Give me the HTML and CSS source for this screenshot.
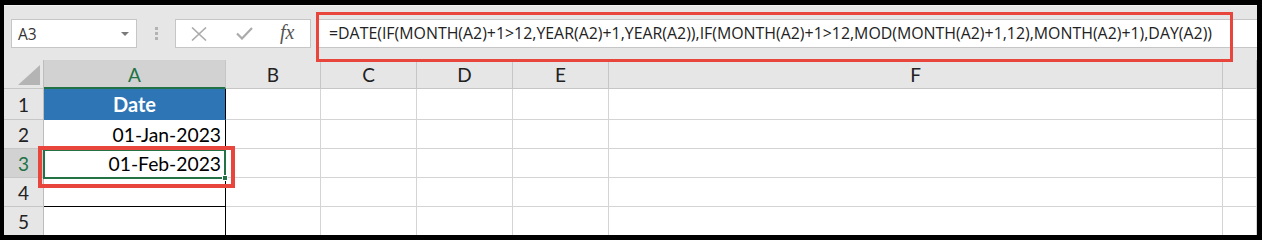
FILE: index.html
```html
<!DOCTYPE html>
<html>
<head>
<meta charset="utf-8">
<link rel="stylesheet" href="styles.css">
</head>
<body>
<div class="page">
  <div class="frame">
    <div class="toolbar">
      <div class="namebox">
        <span class="name">A3</span>
        <svg class="arrow" width="8" height="4" viewBox="0 0 8 4"><path d="M0 0 L8 0 L4 4 Z" fill="#7a7a7a"/></svg>
      </div>
      <div class="dots"><i></i><i></i><i></i></div>
      <div class="buttons">
        <svg class="btn" width="16" height="14" viewBox="0 0 16 14"><path d="M1 0.5 L15 13.5 M15 0.5 L1 13.5" stroke="#ababab" stroke-width="1.6" fill="none"/></svg>
        <svg class="btn" width="17" height="13" viewBox="0 0 17 13"><path d="M1 6.5 L6 11.5 L16 1" stroke="#ababab" stroke-width="2.2" fill="none"/></svg>
        <span class="fx">fx</span>
      </div>
      <div class="formula">=DATE(IF(MONTH(A2)+1&gt;12,YEAR(A2)+1,YEAR(A2)),IF(MONTH(A2)+1&gt;12,MOD(MONTH(A2)+1,12),MONTH(A2)+1),DAY(A2))</div>
    </div>
    <div class="sheet">
      <div class="corner"><svg width="22" height="20" viewBox="0 0 22 20"><path d="M22 0 L22 20 L0 20 Z" fill="#b4b4b4"/></svg></div>
      <div class="ch sel">A</div>
      <div class="ch">B</div>
      <div class="ch">C</div>
      <div class="ch">D</div>
      <div class="ch">E</div>
      <div class="ch">F</div>
      <div class="ch"></div>

      <div class="rh r1">1</div>
      <div class="cell a head">Date</div>
      <div class="cell r1c"></div><div class="cell r1c"></div><div class="cell r1c"></div><div class="cell r1c"></div><div class="cell r1c"></div><div class="cell r1c"></div>

      <div class="rh">2</div>
      <div class="cell a val">01-Jan-2023</div>
      <div class="cell"></div><div class="cell"></div><div class="cell"></div><div class="cell"></div><div class="cell"></div><div class="cell"></div>

      <div class="rh sel">3</div>
      <div class="cell a val">01-Feb-2023</div>
      <div class="cell"></div><div class="cell"></div><div class="cell"></div><div class="cell"></div><div class="cell"></div><div class="cell"></div>

      <div class="rh">4</div>
      <div class="cell a last"></div>
      <div class="cell"></div><div class="cell"></div><div class="cell"></div><div class="cell"></div><div class="cell"></div><div class="cell"></div>

      <div class="rh">5</div>
      <div class="cell a"></div>
      <div class="cell"></div><div class="cell"></div><div class="cell"></div><div class="cell"></div><div class="cell"></div><div class="cell"></div>
    </div>
  </div>
  <div class="selection"><span class="handle"></span></div>
  <div class="mark mark-formula"></div>
  <div class="mark mark-cell"></div>
</div>
</body>
</html>
```

FILE: styles.css
```css
* { box-sizing: border-box; }
html, body { margin: 0; padding: 0; }
body { background: #000; width: 1262px; height: 240px; overflow: hidden; }
.page { position: relative; width: 1262px; height: 240px; padding: 5px 5px 5px 4px; }
.frame { background: #e6e6e6; height: 230px; overflow: hidden; }

.toolbar {
  height: 55px;
  display: flex;
  align-items: flex-start;
  border-top: 1px solid #f2f2f2;
  padding-top: 13px;
}
.namebox {
  margin-left: 7px;
  width: 126px;
  height: 29px;
  background: #fff;
  border: 1px solid #c6c6c6;
  display: flex;
  align-items: center;
  justify-content: space-between;
  padding: 0 7px 0 6px;
}
.name { font-family: "Open Sans", "Noto Sans", sans-serif; font-size: 15.5px; color: #333; }
.arrow { display: block; }
.dots {
  margin-left: 18px;
  width: 3px;
  height: 29px;
  display: flex;
  flex-direction: column;
  justify-content: center;
  gap: 2px;
}
.dots i { display: block; width: 3px; height: 3px; background: #b3b3b3; }
.buttons {
  margin-left: 17px;
  width: 136px;
  height: 29px;
  background: #fff;
  border: 1px solid #c6c6c6;
  display: flex;
  align-items: center;
  padding-left: 15px;
}
.btn { display: block; }
.buttons .btn:nth-child(2) { margin-left: 29px; }
.fx {
  margin-left: 27px;
  font-family: "Liberation Serif", serif;
  font-style: italic;
  font-size: 20px;
  color: #555;
  line-height: 1;
  margin-top: -3px;
}
.formula {
  margin-left: 7px;
  flex: 1;
  height: 29px;
  background: #fff;
  border: 1px solid #c6c6c6;
  border-right: none;
  padding-left: 10px;
  font-family: "Open Sans", "Noto Sans", sans-serif;
  font-size: 15.9px;
  line-height: 27px;
  color: #222;
  white-space: nowrap;
  overflow: hidden;
}

.sheet {
  display: grid;
  grid-template-columns: 40px 182px 95px 96px 96px 96px 614px 34px;
  grid-template-rows: 29px 31px 29px 29px 29px 29px;
  font-family: "Lato", "Noto Sans", sans-serif;
}
.corner {
  border-right: 1px solid #bdbdbd;
  border-bottom: 1px solid #c6c6c6;
  display: flex;
  align-items: flex-end;
  justify-content: flex-end;
  padding: 0 3px 3px 0;
}
.corner svg { display: block; }
.ch {
  background: #e6e6e6;
  border-right: 1px solid #c6c6c6;
  border-bottom: 1px solid #c6c6c6;
  text-align: center;
  font-size: 19px;
  line-height: 30px;
  color: #222;
}
.ch.sel { background: #d2d2d2; color: #217346; border-bottom: 2px solid #217346; }
.rh {
  background: #e6e6e6;
  border-right: 1px solid #bdbdbd;
  border-bottom: 1px solid #c6c6c6;
  text-align: center;
  font-size: 19px;
  line-height: 30px;
  color: #222;
}
.rh.r1 { line-height: 32px; }
.rh.sel { background: #d2d2d2; color: #217346; }
.cell {
  background: #fff;
  border-right: 1px solid #d4d4d4;
  border-bottom: 1px solid #d4d4d4;
}
.cell.a { border-right-color: #000; }
.cell.head {
  background: #2e75b6;
  border-bottom-color: #2e75b6;
  color: #fff;
  font-weight: bold;
  font-size: 20px;
  text-align: center;
  line-height: 31px;
}
.cell.val {
  text-align: right;
  padding-right: 4px;
  font-size: 19.3px;
  line-height: 30px;
  color: #000;
}
.cell.last { border-bottom-color: #000; }

.selection {
  position: absolute;
  left: 43px;
  top: 149px;
  width: 183px;
  height: 30px;
  border: 2px solid #217346;
}
.handle {
  position: absolute;
  right: -4px;
  bottom: -4px;
  width: 6px;
  height: 6px;
  background: #217346;
  border: 1px solid #fff;
}
.mark { position: absolute; border: 4px solid #e8453c; }
.mark-formula { left: 316px; top: 12px; width: 917px; height: 50px; border-width: 3.5px; }
.mark-cell { left: 38px; top: 146px; width: 197px; height: 42px; }
```
